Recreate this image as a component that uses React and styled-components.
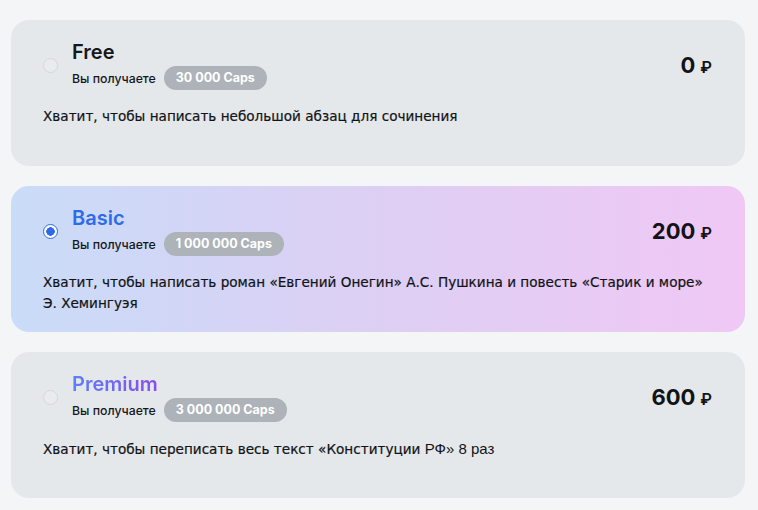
import styled, { createGlobalStyle } from "styled-components";

const GlobalStyle = createGlobalStyle`
  html, body {
    margin: 0;
    padding: 0;
    background: #f4f5f7;
  }
  body {
    font-family: Inter, "Liberation Sans", sans-serif;
    color: #15171a;
  }
`;

const List = styled.div`
  display: flex;
  flex-direction: column;
  gap: 20px;
  padding: 20px 13px 20px 11px;
`;

const Card = styled.div`
  box-sizing: border-box;
  height: 146px;
  padding: 20px 33px 0 32px;
  border-radius: 18px;
  background: ${(p) =>
    p.active ? "linear-gradient(90deg, #c9dcf8 0%, #ddcff4 50%, #f0c8f5 100%)" : "#e5e8eb"};
`;

const Header = styled.div`
  display: flex;
  align-items: center;
  height: 50px;
`;

const Radio = styled.span`
  box-sizing: border-box;
  width: 15px;
  height: 15px;
  border-radius: 50%;
  flex-shrink: 0;
  margin-right: 14px;
  border: 1px solid ${(p) => (p.checked ? "#2f6be8" : "#d4d7dc")};
  background: ${(p) =>
    p.checked ? "radial-gradient(circle, #2f6be8 0 4px, #fff 4.5px)" : "#e9ebee"};
  ${(p) => p.checked && "border-width: 1.5px;"}
`;

const TitleBlock = styled.div`
  display: flex;
  flex-direction: column;
  gap: 2px;
  flex: 1;
`;

const Title = styled.div`
  font-size: 20px;
  line-height: 24px;
  font-weight: 600;
  width: max-content;
  ${(p) => p.tone === "blue" && "color: #2f6be8;"}
  ${(p) =>
    p.tone === "grad" &&
    `
    background: linear-gradient(90deg, #5b80f6 0%, #8a4df0 100%);
    -webkit-background-clip: text;
    background-clip: text;
    color: transparent;
  `}
`;

const GetRow = styled.div`
  display: flex;
  align-items: center;
  gap: 8px;
  height: 24px;
`;

const GetLabel = styled.span`
  font-size: 12.3px;
  font-weight: 500;
`;

const Badge = styled.span`
  height: 24px;
  line-height: 24px;
  padding: 0 12px;
  border-radius: 12px;
  background: #adb3b9;
  color: #fff;
  font-size: 12.5px;
  font-weight: 700;
`;

const Price = styled.div`
  display: flex;
  align-items: baseline;
  gap: 5px;
  font-size: 22px;
  font-weight: 700;
  color: #111316;
`;

const Ruble = styled.span`
  font-size: 16px;
  font-weight: 600;
`;

const Desc = styled.p`
  margin: 16px 0 0;
  font-family: "DejaVu Sans", sans-serif;
  font-size: 13.6px;
  line-height: 21px;
  color: #111316;
  -webkit-text-stroke: 0.2px #111316;
`;

const Alt = styled.span`
  font-family: "Liberation Sans", Arial, sans-serif;
  font-size: 15px;
  -webkit-text-stroke: 0;
`;

const plans = [
  {
    name: "Free",
    tone: "plain",
    caps: "30 000 Caps",
    price: "0",
    desc: "Хватит, чтобы написать небольшой абзац для сочинения",
  },
  {
    name: "Basic",
    tone: "blue",
    active: true,
    caps: "1 000 000 Caps",
    price: "200",
    desc: "Хватит, чтобы написать роман «Евгений Онегин» А.С. Пушкина и повесть «Старик и море» Э. Хемингуэя",
  },
  {
    name: "Premium",
    tone: "grad",
    caps: "3 000 000 Caps",
    price: "600",
    desc: "Хватит, чтобы переписать весь текст «Конституции ",
    tail: "РФ» 8 раз",
  },
];

export default function App() {
  return (
    <>
      <GlobalStyle />
      <List>
        {plans.map((p) => (
          <Card key={p.name} active={p.active}>
            <Header>
              <Radio checked={p.active} />
              <TitleBlock>
                <Title tone={p.tone}>{p.name}</Title>
                <GetRow>
                  <GetLabel>Вы получаете</GetLabel>
                  <Badge>{p.caps}</Badge>
                </GetRow>
              </TitleBlock>
              <Price>
                {p.price}
                <Ruble>₽</Ruble>
              </Price>
            </Header>
            <Desc>
              {p.desc}
              {p.tail && <Alt>{p.tail}</Alt>}
            </Desc>
          </Card>
        ))}
      </List>
    </>
  );
}
